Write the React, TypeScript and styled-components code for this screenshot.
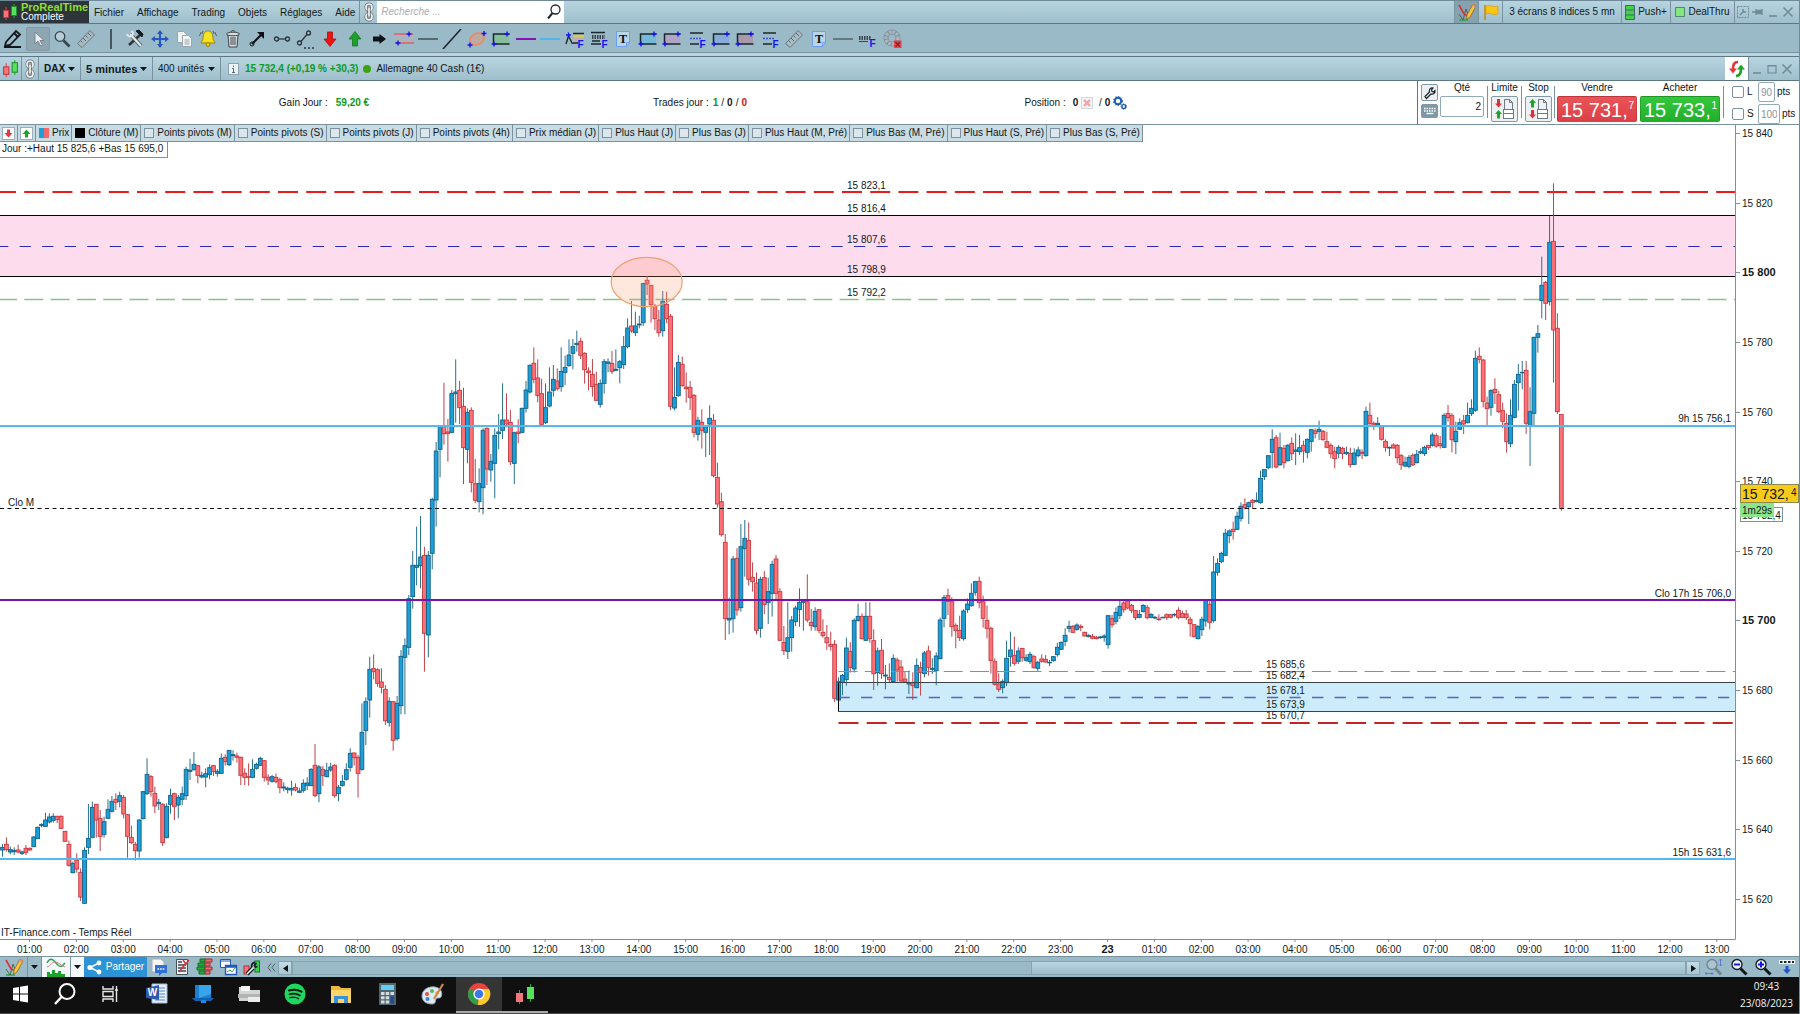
import React, { useLayoutEffect, useRef, useState } from "react";
import styled, { createGlobalStyle } from "styled-components";

const c = {
  barTop: "#b7d4e0",
  barBottom: "#9fbfcc",
  bar: "#9bbac8",
  line: "#7892a0",
  dark: "#5d7684",
  ink: "#101820",
  muted: "#6f8b99",
  legend: "#c9dbe3",
};

const sans = `"Liberation Sans", Arial, Helvetica, sans-serif`;

const Global = createGlobalStyle`
  * { box-sizing: border-box; }
  body { margin: 0; background: #fff; }
  button, input, select { font: inherit; color: inherit; margin: 0; }
`;

const Root = styled.div`
  display: flex;
  flex-direction: column;
  height: 100vh;
  min-height: 600px;
  font-family: ${sans};
  font-size: 10px;
  line-height: 12px;
  color: ${c.ink};
  background: #fff;
  border-right: 1px solid ${c.muted};
`;

const Icon = styled.svg<{ $w?: number; $h?: number }>`
  display: block;
  flex: none;
  width: ${(p) => p.$w ?? 20}px;
  height: ${(p) => p.$h ?? 20}px;
`;

/* ---------- menu bar ---------- */

const MenuBar = styled.header`
  display: flex;
  align-items: stretch;
  height: 24px;
  flex: none;
  background: linear-gradient(${c.barTop}, ${c.barBottom});
  border-top: 1px solid ${c.muted};
  border-bottom: 1px solid ${c.dark};
`;

const Brand = styled.div`
  display: flex;
  align-items: center;
  gap: 3px;
  width: 89px;
  padding-left: 2px;
  background: #2d343a;
  color: #fff;
  line-height: 10px;
`;

const BrandName = styled.strong`
  display: block;
  font-size: 11px;
  color: #8ee02a;
`;

const Menu = styled.nav`
  display: flex;
  align-items: center;
  gap: 13px;
  padding: 2px 4px 0 5px;
`;

const Plain = styled.button`
  display: flex;
  align-items: center;
  justify-content: center;
  padding: 0;
  border: 0;
  background: none;
`;

const LinkSlot = styled(Plain)<{ $w: number }>`
  width: ${(p) => p.$w}px;
  border-left: 1px solid ${c.line};
`;

const Search = styled.label`
  display: flex;
  align-items: center;
  width: 187px;
  padding: 0 3px 0 4px;
  background: #fff;
`;

const SearchInput = styled.input`
  flex: 1;
  min-width: 0;
  padding: 0;
  border: 0;
  outline: 0;
  background: none;
  font-style: italic;
  &::placeholder {
    color: #a8adb2;
    opacity: 1;
  }
`;

const Spacer = styled.div`
  flex: 1;
`;

const StatusCell = styled(Plain)<{ $w: number; $on?: boolean }>`
  width: ${(p) => p.$w}px;
  gap: 3px;
  border-left: 1px solid ${c.line};
  background: ${(p) => (p.$on ? "#87a2af" : "none")};
  white-space: nowrap;
`;

const WindowButtons = styled.div<{ $w: number }>`
  display: grid;
  grid-auto-flow: column;
  grid-auto-columns: 1fr;
  width: ${(p) => p.$w}px;
  padding-right: 4px;
  border-left: 1px solid ${c.line};
`;

/* ---------- drawing toolbar ---------- */

const ToolBar = styled.div`
  height: 33px;
  flex: none;
  border-bottom: 1px solid ${c.dark};
`;

const ToolRow = styled.div`
  height: 29px;
  padding: 1px 0 0 1px;
  border-bottom: 1px solid ${c.line};
  background: ${c.bar};
`;

const Tools = styled.div`
  display: grid;
  grid-template-columns: repeat(37, 1fr);
  width: 903px;
  height: 27px;
  align-items: center;
  justify-items: center;
`;

const ToolGap = styled.div`
  height: 3px;
  background: ${c.barTop};
`;

const Tool = styled(Plain)<{ $on?: boolean }>`
  width: 24px;
  height: 24px;
  border-radius: 2px;
  border: 1px solid ${(p) => (p.$on ? "#8299a4" : "transparent")};
  background: ${(p) => (p.$on ? "#8ea6b2" : "none")};
`;

/* ---------- instrument bar ---------- */

const InstrumentBar = styled.div`
  display: flex;
  align-items: stretch;
  height: 24px;
  flex: none;
  background: linear-gradient(${c.barTop}, ${c.barBottom});
  border-bottom: 1px solid ${c.dark};
`;

const Cell = styled(Plain)<{ $w: number }>`
  width: ${(p) => p.$w}px;
  border-right: 1px solid ${c.line};
`;

const Picker = styled.label<{ $w: number }>`
  display: flex;
  align-items: center;
  width: ${(p) => p.$w}px;
  padding: 0 5px;
  border-right: 1px solid ${c.line};
`;

const PickerSelect = styled.select<{ $bold?: boolean; $size?: number }>`
  appearance: none;
  flex: 1;
  min-width: 0;
  padding: 0;
  border: 0;
  outline: 0;
  background: none;
  font-weight: ${(p) => (p.$bold ? 700 : 400)};
  font-size: ${(p) => p.$size ?? 10}px;
`;

const Quote = styled.div`
  display: flex;
  align-items: center;
  gap: 5px;
  padding-left: 7px;
`;

const Up = styled.strong`
  color: #0b9a24;
  margin-left: 1px;
`;
const Down = styled.strong`
  color: #d01818;
`;
const Dot = styled.span`
  width: 8px;
  height: 8px;
  border-radius: 50%;
  background: #3fa012;
`;

const Refresh = styled(Plain)`
  width: 23px;
  background: #fff;
`;

/* ---------- account and order panel ---------- */

const Panel = styled.section`
  display: flex;
  height: 44px;
  flex: none;
  border-bottom: 1px solid ${c.line};
  background: #fff;
`;

const Account = styled.div`
  flex: 1;
  display: grid;
  grid-template-columns: repeat(3, 1fr);
  padding: 0 153px 0 136px;
  align-items: center;
  justify-items: center;
`;

const Figure = styled.div`
  display: flex;
  align-items: center;
  gap: 3px;
  white-space: pre;
`;

const FigureName = styled.span`
  margin-right: 4px;
`;

const Order = styled.div`
  display: flex;
  width: 382px;
  border-left: 1px solid ${c.dark};
  padding: 1px 0 0 3px;
`;

const SmallTools = styled.div`
  display: flex;
  flex-direction: column;
  gap: 3px;
  padding-top: 2px;
  width: 19px;
`;

const Field = styled.label<{ $w: number }>`
  display: flex;
  flex-direction: column;
  gap: 2px;
  width: ${(p) => p.$w}px;
  align-items: center;
`;

const OrderGroup = styled.div<{ $w: number }>`
  display: flex;
  flex-direction: column;
  align-items: center;
  gap: 2px;
  width: ${(p) => p.$w}px;
`;

const Rule = styled.div<{ $w?: number }>`
  width: ${(p) => p.$w ?? 7}px;
  height: 32px;
  margin-top: 4px;
  background: linear-gradient(${c.line}, ${c.line}) center / 1px 100% no-repeat;
`;

const PriceButtons = styled.div`
  display: flex;
  gap: 3px;
`;

const Box = styled.input<{ $w: number; $h: number; $dim?: boolean }>`
  width: ${(p) => p.$w}px;
  height: ${(p) => p.$h}px;
  padding: 0 2px;
  border: 1px solid #93a9b5;
  border-radius: 2px;
  background: #fff;
  text-align: right;
  color: ${(p) => (p.$dim ? "#8a959c" : c.ink)};
  outline: 0;
`;

const IconButton = styled(Plain)<{ $w: number; $h: number; $fill?: string }>`
  width: ${(p) => p.$w}px;
  height: ${(p) => p.$h}px;
  border: 1px solid #8299a5;
  border-radius: 2px;
  background: ${(p) => p.$fill ?? "#eef1f3"};
`;

const PriceButton = styled.button<{ $fill: string }>`
  display: flex;
  align-items: flex-start;
  justify-content: space-between;
  width: 80px;
  height: 26px;
  padding: 0 2px 0 3px;
  border: 1px solid rgba(0, 0, 0, 0.15);
  border-radius: 2px;
  background: ${(p) => p.$fill};
  color: #fff;
  font-size: 20px;
  line-height: 26px;
  white-space: nowrap;
`;

const Tick = styled.small`
  font-size: 10px;
  line-height: 18px;
`;

const Protect = styled.div`
  display: flex;
  flex-direction: column;
  gap: 2px;
  padding-left: 5px;
`;

const ProtectRow = styled.div`
  display: flex;
  align-items: center;
  gap: 2px;
  height: 20px;
`;

const Check = styled.input<{ $s: number }>`
  appearance: none;
  flex: none;
  width: ${(p) => p.$s}px;
  height: ${(p) => p.$s}px;
  border: 1px solid #7d929e;
  border-radius: ${(p) => (p.$s > 10 ? 2 : 0)}px;
  background: ${(p) => (p.$s > 10 ? "#fff" : "#dbe7ec")};
`;

const CheckLabel = styled.label`
  display: flex;
  align-items: center;
  gap: 3px;
  width: 24px;
`;

/* ---------- chart ---------- */

const ChartPanel = styled.main`
  position: relative;
  flex: 1;
  min-height: 0;
`;

const Plot = styled.svg`
  position: absolute;
  inset: 0;
  width: 100%;
  height: 100%;
  font-family: ${sans};
  font-size: 10px;
  fill: ${c.ink};
`;

const Overlay = styled.div`
  position: absolute;
  top: 0;
  left: 0;
  display: flex;
  flex-direction: column;
  align-items: flex-start;
`;

const Legend = styled.div`
  display: flex;
  height: 17px;
  background: ${c.legend};
  border-bottom: 1px solid ${c.line};
`;

const LegendItem = styled.label`
  display: flex;
  align-items: center;
  gap: 3px;
  padding: 0 2px 0 3px;
  border-right: 1px solid ${c.line};
  white-space: nowrap;
`;

const LegendArrow = styled(Plain)`
  width: 18px;
  border-right: 1px solid ${c.line};
`;

const Swatch = styled.span<{ $fill: string }>`
  width: 10px;
  height: 10px;
  background: ${(p) => p.$fill};
`;

const DayRange = styled.div`
  height: 16px;
  padding: 1px 4px 0 2px;
  border: solid ${c.line};
  border-width: 0 1px 1px 0;
  background: #fff;
  white-space: nowrap;
`;

/* ---------- bottom bars ---------- */

const BottomBar = styled.div`
  display: flex;
  align-items: stretch;
  height: 21px;
  flex: none;
  background: ${c.bar};
  border-top: 1px solid ${c.line};
  overflow: hidden;
`;

const BottomButton = styled(Plain)<{ $w: number; $fill?: string; $edge?: boolean }>`
  width: ${(p) => p.$w}px;
  flex: none;
  background: ${(p) => p.$fill ?? "none"};
  border-right: ${(p) => (p.$edge ? `1px solid ${c.line}` : "0")};
`;

const Share = styled(Plain)`
  width: 63px;
  gap: 4px;
  background: #2c93d6;
  color: #fff;
`;

const Track = styled.div`
  flex: 1;
  display: flex;
  align-items: stretch;
  margin: 4px 0 2px;
  border: 1px solid #86a3b1;
`;

const Thumb = styled.div`
  width: 47%;
  margin-left: auto;
  background: linear-gradient(#b9d6e2, #9dbdcb);
  border-left: 1px solid #86a3b1;
`;

const ScrollButton = styled(Plain)`
  width: 14px;
  flex: none;
  margin: 4px 0 2px;
  border: 1px solid #86a3b1;
  background: linear-gradient(#c6dde6, #a9c6d2);
`;

const TaskBar = styled.footer`
  display: flex;
  height: 37px;
  flex: none;
  background: #101010;
  color: #f2f2f2;
  border-bottom: 1px solid #4a4a4a;
`;

const Task = styled(Plain)<{ $w?: number; $active?: boolean; $open?: boolean }>`
  width: ${(p) => p.$w ?? 46}px;
  background: ${(p) => (p.$active ? "#343434" : "none")};
  border-bottom: 2px solid ${(p) => (p.$active || p.$open ? "#a9a9a9" : "transparent")};
`;

const Clock = styled.div`
  margin-left: auto;
  padding: 1px 6px 0 0;
  display: flex;
  flex-direction: column;
  gap: 1px;
  align-items: center;
  font-family: "Open Sans", "Noto Sans", sans-serif;
  line-height: 16px;
`;

const DateLine = styled.span``;

/* ---------- shared icons ---------- */

const Caret = () => (
  <Icon $w={7} $h={4} viewBox="0 0 7 4"><path d="M0 0h7L3.500 4z" fill="#0c1318" /></Icon>
);

const Candles = ({ s = 16 }: { s?: number }) => (
  <Icon $w={s} $h={s} viewBox="0 0 16 16">
    <path d="M4 3v13" stroke="#e0454c" /><path d="M12 0v14" stroke="#29a33a" />
    <rect x="1.5" y="6.500" width="5" height="7" fill="#f2767b" stroke="#c5363d" />
    <rect x="9.500" y="2.500" width="5" height="9" fill="#58e05c" stroke="#1f8f2f" />
  </Icon>
);

const Chain = () => (
  <Icon $w={10} $h={20} viewBox="0 0 10 20" fill="none" strokeLinecap="round">
    <g stroke="#5c666c" strokeWidth="3"><rect x="2" y="2" width="6" height="6.500" rx="3" /><rect x="2" y="11.500" width="6" height="6.500" rx="3" /></g>
    <g stroke="#f6f6f3" strokeWidth="1.700"><rect x="2" y="2" width="6" height="6.500" rx="3" /><rect x="2" y="11.500" width="6" height="6.500" rx="3" /></g>
    <path d="M5 6v8" stroke="#5c666c" strokeWidth="3.200" /><path d="M5 6v8" stroke="#f6f6f3" strokeWidth="1.700" />
  </Icon>
);

const PencilChart = () => (
  <Icon viewBox="0 0 20 20" fill="none">
    <path d="M2 18h9" stroke="#2ca44a" strokeWidth="1.500" />
    <path d="M2 12l4 6 3-11 3 8" stroke="#4d6a56" />
    <path d="M2 3l5 9 4 2" stroke="#d8323a" strokeWidth="1.600" />
    <path d="M16 2l3 2-6 11-3.500 2.500.500-4.500z" fill="#f7c63c" stroke="#8a6a20" strokeWidth=".8" />
    <path d="M16 2l3 2-1 2-3-2z" fill="#ee8a84" />
  </Icon>
);

const Minimize = () => (
  <Icon $w={12} $h={12} viewBox="0 0 12 12"><path d="M2 10h8" stroke={c.muted} strokeWidth="1.600" /></Icon>
);
const Maximize = () => (
  <Icon $w={12} $h={12} viewBox="0 0 12 12"><path d="M2 2.500h8v7.500H2zM2 3h8" stroke={c.muted} strokeWidth="1.200" fill="none" /></Icon>
);
const Close = () => (
  <Icon $w={12} $h={12} viewBox="0 0 12 12"><path d="M1.500 1.500l9 9M10.500 1.500l-9 9" stroke={c.muted} strokeWidth="1.600" /></Icon>
);

const Gears = () => (
  <Icon $w={14} $h={14} viewBox="0 0 14 14" fill="none" stroke="#1d5cae">
    <circle cx="5" cy="5" r="3.200" strokeWidth="2" /><circle cx="5" cy="5" r="4.600" strokeWidth="1" strokeDasharray="1.500 1.500" />
    <circle cx="10.800" cy="10.500" r="1.900" strokeWidth="1.400" /><circle cx="10.800" cy="10.500" r="2.800" strokeWidth=".8" strokeDasharray="1 1" />
  </Icon>
);

const ArrowV = ({ up, tone, x = 0, y = 0 }: { up?: boolean; tone: string; x?: number; y?: number }) => (
  <path transform={`translate(${x} ${y})`} fill={tone} d={up ? "M3.500 0L7 4H5v4.500H2V4H0z" : "M2 0h3v4.500h2L3.500 8.500 0 4.500h2z"} />
);

const OrderIcon = ({ stop }: { stop?: boolean }) => (
  <Icon $w={22} $h={22} viewBox="0 0 22 22">
    <path d="M10.500 12V1.500h5l3 3V11M15.500 1.500v3h3" fill="none" stroke="#6c7a82" />
    <ArrowV x={1} y={1} up={stop} tone={stop ? "#1ea32c" : "#df3038"} />
    <ArrowV x={1} y={12} up={!stop} tone={stop ? "#df3038" : "#1ea32c"} />
    <rect x="9.500" y="11.500" width="10" height="4" fill="#fff" stroke="#6c7a82" /><rect x="9.500" y="15.500" width="10" height="5" fill="#fff" stroke="#6c7a82" />
  </Icon>
);

const Magnifier = ({ tone = "#29343b", sign, glass = "#eaf4ff" }: { tone?: string; sign?: string; glass?: string }) => (
  <Icon $w={18} $h={18} viewBox="0 0 18 18" fill="none">
    <path d="M10.500 10.500l6 6" stroke={tone} strokeWidth="3" /><circle cx="7" cy="6.500" r="5" fill={glass} stroke={tone} strokeWidth="1.300" />
    {sign && <path d={sign} stroke="#1414e0" strokeWidth="2" />}
  </Icon>
);

/* ---------- drawing tools ---------- */

const plus = (x: number, y: number) => `M${x - 2.5} ${y}h5M${x} ${y - 2.5}v5`;
const BLUE = "#1414f0";

const RulerArt = () => (
  <g><path d="M1.500 14.500L14 1.500l4.500 4.500L6 18.500z" fill="#a9bac2" stroke="#66757e" /><path d="M4.500 11.500l2 2M7 9l3 3M9.500 6.500l2 2M12 4l3 3" stroke="#57656d" /></g>
);
const TextArt = () => (
  <g><path d="M3.500 2.500h13v11l-3 4h-10z" fill="#b9d5e6" stroke="#6f9df0" /><path d="M13.500 17.500v-4h3" fill="none" stroke="#6f9df0" /><text x="10" y="14" textAnchor="middle" fontSize="12" fontWeight="700" fontFamily="Liberation Serif, serif" fill="#0a0f14">T</text></g>
);
const BoxArt = ({ fill }: { fill: string }) => (
  <g><rect x="2.500" y="5" width="15.500" height="10" fill={fill} /><path d="M18.500 5h-16v10h16" fill="none" stroke="#1d262c" strokeWidth="1.500" /><path d={plus(16, 5) + plus(3, 15)} stroke={BLUE} strokeWidth="1.400" /></g>
);
const FText = ({ y = 19 }: { y?: number }) => <text x="12.500" y={y} fontSize="10" fontWeight="700" fill={BLUE}>F</text>;
const LevelsArt = () => (
  <g><path d="M3 4h13M3 15h9" stroke="#1d262c" strokeWidth="1.500" /><path d="M3 9.500h12" stroke="#3d55d8" strokeDasharray="2 1" strokeWidth="1.300" /><FText /></g>
);

const tools: { name: string; on?: boolean; art: React.ReactNode }[] = [
  { name: "Dessiner", art: <g fill="none" stroke="#10161a"><path d="M3 13L13 2l4 3.500L7 16l-5 1z" strokeWidth="1.800" /><path d="M1 18h17" strokeWidth="2" /><path d="M11 4l4 4" strokeWidth="2" /></g> },
  { name: "Sélection", on: true, art: <path d="M7 3v12l3-3 2.500 5 2-1-2.500-4.500h4z" fill="#e9edef" stroke="#76858d" /> },
  { name: "Loupe", art: <g fill="none"><path d="M11.500 11.500l6 6" stroke="#39434a" strokeWidth="2.600" /><circle cx="8" cy="7.500" r="4.800" stroke="#39434a" strokeWidth="1.300" fill="#b5cdd8" /></g> },
  { name: "Règle", art: <RulerArt /> },
  { name: "Séparateur", art: <path d="M10 0v20" stroke="#222d34" strokeWidth="1.400" /> },
  { name: "Outils", art: <g fill="none"><path d="M4 16L15 6" stroke="#2a3238" strokeWidth="2.400" /><path d="M11 2l6 6 1-3-4-4z" fill="#161c20" stroke="#161c20" /><path d="M5 5l11 12" stroke="#4b565d" strokeWidth="4" /><path d="M5 5l11 12" stroke="#e4e9eb" strokeWidth="2.200" /><path d="M2 5a3.500 3.500 0 0 0 5 2 3.500 3.500 0 0 0-.5-5" stroke="#e4e9eb" strokeWidth="2" /></g> },
  { name: "Déplacer", art: <path fill="#2257c4" d="M10 1l3 4h-2v4h4V7l4 3-4 3v-2h-4v4h2l-3 4-3-4h2v-4H5v2l-4-3 4-3v2h4V5H7z" /> },
  { name: "Copier", art: <g fill="#f2f4f4" stroke="#9aa6ad"><path d="M3.500 2.500h6l3 3v8h-9z" /><path d="M8.500 6.500h6l3 3v8h-9z" /><path d="M10.500 11h5M10.500 13h5M10.500 15h5" /></g> },
  { name: "Alerte", art: <g><path d="M10 2c-4 0-5 4-5 8l-2 4h14l-2-4c0-4-1-8-5-8z" fill="#f6e21e" stroke="#9a8610" /><circle cx="10" cy="15.500" r="2" fill="#e8c810" stroke="#9a8610" /><path d="M3 3L1.500 7M5 2L4 5M17 3l1.500 4M15 2l1 3" stroke="#55616a" /></g> },
  { name: "Supprimer", art: <g fill="#d9dcdd" stroke="#3b454b"><path d="M5 6h10l-1 12H6z" /><ellipse cx="10" cy="5" rx="6.500" ry="1.800" /><path d="M8 3c0-2 4-2 4 0M8 8v8M10 8v8M12 8v8" fill="none" /></g> },
  { name: "Flèche", art: <g><path d="M5 15l9-9" stroke="#0d1215" strokeWidth="2.200" /><path d="M10 3h7v7z" fill="#0d1215" /><circle cx="5" cy="15" r="2" fill="none" stroke="#0d1215" /></g> },
  { name: "Segment", art: <g fill="none" stroke="#2b353b" strokeWidth="1.300"><circle cx="4.500" cy="10" r="2" /><circle cx="15.500" cy="10" r="2" /><path d="M6.500 10h7" /></g> },
  { name: "Segment prolongé", art: <g fill="none" stroke="#2b353b" strokeWidth="1.300"><circle cx="3.500" cy="14" r="2" /><circle cx="12.500" cy="4" r="2" /><path d="M5 12.500l6-7" /><path d="M8 19h11" strokeWidth="1.600" strokeDasharray="2 2" /></g> },
  { name: "Flèche baissière", art: <path d="M7.500 3h5v7H16l-6 7.500L4 10h3.500z" fill="#ee1212" stroke="#a51010" strokeWidth=".8" /> },
  { name: "Flèche haussière", art: <path d="M7.500 17h5v-7H16l-6-7.500L4 10h3.500z" fill="#1fa02c" stroke="#117a1c" strokeWidth=".8" /> },
  { name: "Flèche droite", art: <path d="M4 7.500h6.500V5L17 10l-6.500 5v-2.500H4z" fill="#0d1215" /> },
  { name: "Canal", art: <g><rect x="1" y="5" width="18" height="9" fill="#abb3bc" /><path d="M0 5h19M1 14h19" stroke="#e0606a" strokeWidth="1.300" /><path d={plus(15, 5) + plus(4, 14)} stroke={BLUE} strokeWidth="1.400" /></g> },
  { name: "Horizontale", art: <path d="M0 10h20" stroke="#48555c" strokeWidth="1.600" /> },
  { name: "Droite", art: <path d="M1 20L19 0" stroke="#1a2227" strokeWidth="1.500" /> },
  { name: "Ellipse", art: <g><ellipse cx="10" cy="10" rx="7.500" ry="5.500" fill="#c0a9a2" stroke="#e88a5a" strokeWidth="1.500" transform="rotate(-25 10 10)" /><path d={plus(17, 4.5) + plus(3, 16)} stroke={BLUE} strokeWidth="1.400" /></g> },
  { name: "Rectangle vert", art: <BoxArt fill="#86bf9c" /> },
  { name: "Ligne violette", art: <path d="M0 10h20" stroke="#8416b8" strokeWidth="2" /> },
  { name: "Ligne bleue", art: <path d="M0 10h20" stroke="#4fb6ec" strokeWidth="2" /> },
  { name: "Fibonacci", art: <g><path d="M8 7h11" stroke="#d8c860" strokeWidth="3" /><path d="M9 10.500h10" stroke="#d8a888" strokeWidth="2" /><path d="M1 15L3.500 7l4 8M8 4.500h11M8 14h5" fill="none" stroke="#1d262c" strokeWidth="1.400" /><path d={plus(3.5, 6)} stroke={BLUE} strokeWidth="1.300" /><FText /></g> },
  { name: "Niveaux", art: <g><path d="M2 3.500h14M2 15h10M3 12h8" stroke="#1d262c" strokeWidth="1.400" /><path d="M3 8h13" stroke="#39444b" strokeWidth="4" strokeDasharray="1.500 1" /><FText /></g> },
  { name: "Texte", art: <TextArt /> },
  { name: "Rectangle cyan", art: <BoxArt fill="#74b9d8" /> },
  { name: "Rectangle mauve", art: <BoxArt fill="#b0a4c4" /> },
  { name: "Retracement", art: <LevelsArt /> },
  { name: "Rectangle bleu", art: <BoxArt fill="#86abd8" /> },
  { name: "Rectangle rosé", art: <BoxArt fill="#a89aa8" /> },
  { name: "Extension", art: <LevelsArt /> },
  { name: "Mesure", art: <RulerArt /> },
  { name: "Note", art: <TextArt /> },
  { name: "Ligne grise", art: <path d="M0 10h20" stroke="#5b686f" strokeWidth="1.600" /> },
  { name: "Volume", art: <g><path d="M2 9h12" stroke="#39444b" strokeWidth="4" strokeDasharray="1.500 1" /><path d="M2 12.500h9" stroke="#39444b" /><FText y={18} /></g> },
  { name: "Effacer", art: <g fill="none"><circle cx="10" cy="9" r="6" stroke="#7e8f98" strokeWidth="5" /><circle cx="10" cy="9" r="6" stroke="#a9b9c1" strokeWidth="3.400" strokeDasharray="2.500 1" /><rect x="12" y="11.500" width="7.500" height="7.500" fill="#e2454c" /><path d="M13.500 13l4.500 4.500M18 13l-4.500 4.500" stroke="#8c1b22" strokeWidth="1.200" /></g> },
];

/* ---------- market data ---------- */

// Five-minute bars. Each bar reads: direction, high, open/close top, open/close bottom, low.
// Values are thirds of a chart unit, counted down from the origin of their series.
const series: { origin: number; bars: string }[] = [
  { origin: 595, bars: `u 372 382 390 410;d 352 373 389 395;u 380 389 396 403;u 382 391 395 405;d 374 390 396 400;u 392 396 400 405;d 375 385 397 405;d 382 385 390 392;u 348 351 380 380;u 320 322 356 356;u 310 313 317 322;u 278 300 319 321;u 280 291 306 310;u 280 289 301 308;d 287 289 298 309;d 286 289 325 327;d 333 334 364 366;d 362 373 436 440;u 425 430 458 460;d 400 421 447 458;d 445 457 531 543;u 382 391 550 552;u 252 355 382 402;u 245 262 352 355;d 252 253 300 353;d 270 295 349 393;u 290 305 343 353;u 238 268 295 297;u 228 244 274 277;d 220 238 247 270;u 215 227 244 262;d 225 232 282 295;d 282 284 349 413;d 317 352 368 372;d 366 373 392 422;u 298 300 393 413;u 213 215 296 298;u 115 163 221 225;d 165 170 215 230;d 200 220 258 280;u 237 247 251 270;d 250 253 368 378;u 250 259 353 355;u 206 226 253 281;d 218 221 259 300;u 225 232 255 295;u 200 221 238 255;u 140 148 227 240;u 116 151 154 180;u 96 133 149 152;d 135 137 166 190;u 155 166 171 175;u 145 161 171 202;u 133 143 164 178;d 135 137 155 168;u 147 154 160 170;u 100 115 160 162;d 103 112 125 137;u 90 91 134 138;u 91 104 107 122;d 98 108 112 128;d 110 112 166 195;d 145 160 172 195;d 130 170 172 197;u 118 148 172 175;u 128 133 145 149;u 110 115 136 137;d 120 122 172 185;d 163 172 180 195;u 165 170 184 188;d 160 172 185 190;d 173 179 203 220;u 187 201 204 214;u 200 205 209 220;u 182 205 210 227;d 190 202 210 214;u 203 213 217 217;u 178 190 211 218;u 172 189 196 210;u 145 148 197 198;d 72 136 227 232;u 135 141 221 247;d 138 148 166 198;u 128 152 170 172;u 128 141 150 155;d 133 136 227 233;u 195 202 221 244;u 165 184 196 200;u 130 149 178 182;u 85 100 142 155;d 97 99 113 137;d 105 112 160 233` },
  { origin: 195, bars: `u 1150 1237 1348 1352;u 1132 1145 1232 1275;u 1010 1048 1140 1193;d 1003 1046 1055 1078;d 1045 1049 1090 1100;d 1045 1086 1102 1120;d 1095 1108 1202 1215;u 1132 1144 1207 1220;d 1143 1145 1261 1292;u 1128 1150 1256 1262;u 990 1009 1157 1183;u 955 977 1012 1183;u 825 836 982 1005;u 693 736 830 866;u 620 736 742 796;u 588 711 737 805;d 680 706 940 1055;u 693 706 945 1012;u 533 538 700 748;u 366 393 540 620;u 315 318 388 472;d 188 317 341 374;d 297 336 341 425;u 210 221 337 340;u 118 216 221 308;d 183 211 263 312;d 203 259 383 492;u 265 277 388 430;d 262 271 487 517;d 417 491 541 550;u 445 491 545 577;u 325 331 503 583;d 322 325 447 495;u 402 424 450 485;u 325 346 430 535;u 282 336 341 388;u 190 300 331 357;d 220 300 312 322;d 270 307 425 435;u 335 338 430 492;d 298 336 341 370;u 263 265 337 340;u 183 210 265 278;u 133 136 216 221;d 82 130 178 190;d 118 174 227 247;d 176 221 313 315;u 190 263 308 312;u 142 216 258 262;u 135 178 211 230;d 145 183 206 212;u 82 154 200 215;u 107 142 157 195;u 58 105 137 140;u 57 80 100 148;u 32 70 74 95;d 53 64 106 117;d 97 100 149 191;d 142 153 158 211;d 117 163 200 230;d 155 193 241 243;u 178 190 253 263;u 117 125 190 221;u 115 126 130 157;d 93 130 154 162;u 88 148 151 152;u 120 125 143 190;u 48 80 134 147` },
  { origin: 115, bars: `u 235 264 320 325;d 183 258 273 278;u 215 258 278 288;u 227 252 255 265;u 128 131 248 258;d 108 121 132 165;d 135 136 194 248;d 192 199 236 270;d 210 240 278 290;u 153 184 272 290;d 155 193 236 250;d 222 229 499 510;u 382 472 504 511;u 345 367 467 470;d 350 373 437 440;d 397 441 446 488;d 423 442 472 510;d 462 466 577 592;u 530 541 583 602;d 508 547 571 626;u 555 558 577 651;u 496 535 552 645;d 522 541 707 712;d 668 712 792 803;d 758 785 884 890;d 882 907 1136 1200;u 1073 1135 1140 1183;u 948 957 1136 1178;d 925 955 1110 1127;u 852 920 1103 1115;u 840 895 926 1010;d 847 901 1018 1037;d 967 1012 1025 1055;d 997 1029 1171 1183;u 1010 1018 1165 1193;d 993 1013 1093 1122;u 1013 1055 1088 1152;u 962 973 1060 1130;d 945 957 1060 1078;d 1045 1055 1201 1203;d 1158 1207 1232 1245;u 1087 1193 1234 1257;u 1128 1140 1193 1235;u 1097 1104 1145 1158;u 1045 1087 1109 1160;u 1078 1083 1087 1172;d 1003 1085 1140 1147;d 1107 1147 1157 1172;u 1102 1114 1160 1172;d 1107 1109 1171 1180;d 1138 1177 1187 1193;d 1155 1193 1208 1230;d 1175 1213 1219 1232;d 1200 1213 1375 1386;u 1312 1325 1380 1385;u 1302 1306 1328 1366;u 1193 1224 1319 1337;d 1207 1234 1282 1298;u 1135 1141 1287 1298;u 1091 1129 1141 1145;d 1120 1129 1196 1198;u 1087 1129 1201 1203;d 1087 1129 1196 1208;d 1168 1202 1301 1350;u 1223 1233 1298 1337;d 1197 1231 1301 1317;u 1275 1305 1308 1348;d 1270 1312 1319 1328;u 1243 1255 1325 1328;d 1253 1260 1290 1325;d 1260 1281 1323 1327;d 1293 1317 1326 1328;u 1292 1328 1332 1362;d 1297 1329 1337 1380;u 1255 1276 1343 1345;d 1265 1283 1297 1367;u 1233 1239 1301 1312;d 1217 1233 1282 1307;u 1255 1285 1288 1302;u 1237 1248 1292 1336;u 1133 1140 1256 1258;u 1065 1073 1135 1162` },
  { origin: 435, bars: `d 86 107 124 165;d 112 125 200 230;d 190 196 211 265;d 167 211 233 243;u 148 153 236 242;u 115 132 149 158;u 70 100 137 140;u 63 65 97 107;d 50 64 128 145;d 107 125 175 203;d 137 181 205 235;d 200 205 302 340;d 295 305 373 377;d 340 372 388 396;u 358 364 383 400;u 242 295 368 378;u 215 270 290 320;d 230 286 310 317;u 262 273 304 312;d 264 265 293 305;u 283 293 301 305;u 275 283 305 312;d 285 290 323 326;u 303 307 325 335;d 283 297 304 308;d 285 298 306 308;u 300 307 308 318;u 288 290 302 305;u 248 262 284 290;u 245 247 268 270;u 205 226 244 258;u 182 199 205 217;d 195 199 217 218;u 190 195 208 212;d 193 199 203 213;d 215 217 228 229;u 223 226 230 232;d 222 229 235 238;d 228 232 236 238;u 228 231 233 237;u 223 228 232 245;u 165 167 254 266;d 165 176 194 203;u 142 157 184 193;u 122 139 166 177;d 118 129 149 158;d 120 123 144 148;d 132 136 151 160;d 150 152 173 180;u 150 163 172 175;u 133 136 155 157;d 135 143 173 178;u 160 163 172 175;u 168 172 174 178;d 163 177 179 182;u 170 172 173 174;d 160 164 172 180;d 162 164 172 175;u 160 163 165 170;d 142 151 172 178;d 152 161 172 175;d 150 162 173 180;d 170 178 191 230;d 192 194 230 232;u 195 200 236 238;u 170 178 209 228;u 118 121 183 200;d 118 133 187 208` },
  { origin: 255, bars: `u 528 576 722 728;u 535 550 577 587;u 515 520 545 550;u 447 460 526 528;u 448 453 467 490;d 425 448 454 479;u 395 409 448 450;u 367 379 415 425;d 355 374 383 388;u 365 368 380 432;d 357 361 367 387;u 337 361 365 367;u 272 295 368 371;u 268 269 290 300;u 225 227 263 268;u 148 178 217 265;d 165 173 261 265;u 158 203 254 258;d 195 205 248 265;u 192 196 242 245;d 172 190 221 240;u 160 210 214 255;u 165 203 215 225;d 182 196 213 248;u 175 178 217 235;u 148 149 184 215;d 145 153 160 175;u 122 148 154 180;d 150 154 179 182;d 155 185 202 205;d 190 196 221 235;d 200 215 236 265;u 195 202 220 235;d 200 205 220 237;u 200 217 221 225;d 203 220 254 263;u 205 219 253 255;u 200 210 227 232;d 208 217 220 237;u 80 94 227 230;d 68 106 130 135;d 125 130 135 150;u 112 130 134 138;d 135 137 178 182;d 178 184 202 215;u 200 202 204 228;d 190 195 204 206;d 192 196 233 250;d 222 227 254 270;u 230 247 258 262;u 225 232 259 265;d 220 226 254 258;u 210 223 248 250;u 205 215 219 222;u 197 202 221 228;d 195 196 203 210;u 158 165 196 200;d 160 167 198 203;d 168 191 197 206;u 100 106 202 203;d 75 100 113 125;d 100 107 179 217;u 125 154 185 222` },
  { origin: 35, bars: `u 775 788 808 810;d 765 782 792 822;u 728 766 788 790;u 718 745 761 768;u 572 595 751 755;d 562 589 598 610;d 597 600 724 742;d 710 729 746 795;u 688 692 742 767;d 655 688 698 732;d 692 704 755 760;d 728 752 784 805;d 760 790 845 878;u 718 766 851 862;u 660 673 772 775;u 612 643 668 752;u 603 637 638 688;d 603 631 790 822;u 682 755 796 918;u 530 532 760 798;u 495 521 532 578;u 290 376 422 475;d 363 367 430 480;u 167 247 425 437;d 70 244 510 668;d 460 505 755 762;d 763 763 1045 1052` },
];

const bars = series.flatMap(({ origin, bars: text }) =>
  text.split(";").map((row) => {
    const [dir, ...v] = row.trim().split(" ");
    const [high, top, bottom, low] = v.map((n) => origin + Number(n) / 3);
    return { up: dir === "u", high, top, bottom, low };
  })
);

const BASE_W = 1736;
const BASE_H = 831;
const AXIS_W = 63;
const AXIS_H = 17;

const priceUnit = (p: number) => 8.5 + (15840 - p) * 3.4818;
const fr = (p: number, digits = 1) => {
  const [a, b] = p.toFixed(digits).split(".");
  return `${a.slice(0, 2)} ${a.slice(2)}${b ? "," + b : ""}`;
};

const upperLevels = [
  { p: 15823.1, stroke: "#ee1a1a", w: 2, dash: "20 8.2", from: -4 },
  { p: 15816.4, stroke: "#000", w: 1 },
  { p: 15807.6, stroke: "#2a2ab8", w: 1, dash: "11.3 11.25", from: -3 },
  { p: 15798.9, stroke: "#000", w: 1 },
  { p: 15792.2, stroke: "#86c486", w: 1.5, dash: "19 7.3", from: -2 },
];
const lowerLevels = [
  { p: 15685.6, stroke: "#5bb05b", w: 1, dash: "19 7.3" },
  { p: 15682.4, stroke: "#3c4448", w: 1 },
  { p: 15678.1, stroke: "#5a60c8", w: 1.5, dash: "11.3 11.25" },
  { p: 15673.9, stroke: "#3c4448", w: 1 },
  { p: 15670.7, stroke: "#c42424", w: 2, dash: "20 8.2" },
];
const marks = [
  { p: 15756.1, name: "9h", stroke: "#53b9ee", w: 2 },
  { p: 15706.0, name: "Clo 17h", stroke: "#7a12b0", w: 2 },
  { p: 15631.6, name: "15h", stroke: "#53b9ee", w: 2 },
];

function Chart() {
  const ref = useRef<SVGSVGElement>(null);
  const [size, setSize] = useState({ w: BASE_W + AXIS_W, h: BASE_H });
  useLayoutEffect(() => {
    const el = ref.current;
    if (!el) return;
    const measure = () => {
      const r = el.getBoundingClientRect();
      setSize({ w: r.width, h: r.height });
    };
    measure();
    const watch = new ResizeObserver(measure);
    watch.observe(el);
    return () => watch.disconnect();
  }, []);

  const right = size.w - AXIS_W;
  const floor = size.h - AXIS_H;
  const kx = right / BASE_W;
  const ky = size.h / BASE_H;
  const X = (v: number) => v * kx;
  const Y = (v: number) => v * ky;
  // Thin lines sit on pixel centres and two-pixel lines on pixel edges, so both stay sharp.
  const P = (p: number, w = 1) => (w === 2 ? Math.round(Y(priceUnit(p))) : Math.floor(Y(priceUnit(p))) + 0.5);
  const zoneX = Math.round(X(838)) + 0.5;
  const now = P(15732.4);

  return (
    <Plot ref={ref} role="img" aria-label="DAX 5 minutes">
      <rect x={0} y={P(15816.4)} width={right} height={P(15798.9) - P(15816.4)} fill="#fddcee" />
      <rect x={zoneX} y={P(15682.4)} width={right - zoneX} height={P(15673.9) - P(15682.4)} fill="#ccecfb" />

      {upperLevels.map((l) => (
        <line key={l.p} x1={l.from ?? 0} x2={right} y1={P(l.p, l.w)} y2={P(l.p, l.w)} stroke={l.stroke} strokeWidth={l.w} strokeDasharray={l.dash} />
      ))}

      {bars.map((b, i) => {
        const x = X(2.5 + i * 3.9068);
        return (
          <g key={i}>
            <line x1={x} x2={x} y1={Y(b.high)} y2={Y(b.low)} stroke={b.up ? "#27708f" : "#bf4148"} />
            <rect x={x - 1.9} y={Y(b.top)} width={3.8} height={Math.max(Y(b.bottom) - Y(b.top), 0.5)} fill={b.up ? "#1b9fd6" : "#fa7276"} stroke={b.up ? "#11618a" : "#c63a41"} strokeWidth={0.9} />
          </g>
        );
      })}

      {lowerLevels.map((l) => (
        <line key={l.p} x1={zoneX} x2={right} y1={P(l.p, l.w)} y2={P(l.p, l.w)} stroke={l.stroke} strokeWidth={l.w} strokeDasharray={l.dash} />
      ))}
      <line x1={zoneX} x2={zoneX} y1={P(15682.4)} y2={P(15673.9)} stroke="#000" />

      <ellipse cx={X(646.7)} cy={Y(157)} rx={X(35.5)} ry={Y(24.7)} fill="#f9966a" fillOpacity={0.22} stroke="#efa070" strokeWidth={1.2} />

      {upperLevels.map((l) => <text key={l.p} x={X(847)} y={P(l.p) - 4}>{fr(l.p)}</text>)}
      {lowerLevels.map((l) => <text key={l.p} x={X(1266)} y={P(l.p) - 4}>{fr(l.p)}</text>)}

      {marks.map((m) => (
        <g key={m.p}>
          <line x1={0} x2={right} y1={P(m.p, m.w)} y2={P(m.p, m.w)} stroke={m.stroke} strokeWidth={m.w} />
          <text x={right - 5} y={P(m.p) - 4} textAnchor="end">{m.name} {fr(m.p)}</text>
        </g>
      ))}

      <line x1={0} x2={right + 4} y1={now} y2={now} stroke="#101010" strokeDasharray="4 3.5" />
      <text x={8} y={now - 3}>Clo M</text>
      <text x={1} y={floor - 3}>IT-Finance.com - Temps Réel</text>

      <path d={`M${right - 0.5} 0V${floor + 0.5}H0`} fill="none" stroke={c.line} />
      {Array.from({ length: 12 }, (_, i) => 15840 - i * 20).map((p) => {
        const strong = p % 100 === 0;
        return (
          <g key={p}>
            <line x1={right} x2={right + 4} y1={P(p)} y2={P(p)} stroke={c.line} />
            <text x={right + 6} y={P(p) + 3} fontWeight={strong ? 700 : 400} fontSize={strong ? 11 : 10}>{fr(p, 0)}</text>
          </g>
        );
      })}
      {Array.from({ length: 37 }, (_, i) => i).map((i) => {
        const hour = (i + 1) % 24;
        const day = hour === 0;
        const x = X(29.5 + i * 46.87);
        return (
          <g key={i}>
            <line x1={x} x2={x} y1={floor} y2={floor + 3} stroke={c.line} />
            <text x={x} y={floor + 14} textAnchor="middle" fontWeight={day ? 700 : 400} fontSize={day ? 11 : 10}>
              {day ? "23" : `${String(hour).padStart(2, "0")}:00`}
            </text>
          </g>
        );
      })}

      <rect x={right + 4.5} y={now - 1} width={42} height={14} fill="#fff" stroke={c.line} />
      <text x={right + 6} y={now + 10}>15 732,4</text>
      <rect x={right + 4} y={now - 5.5} width={34} height={14} fill="#8ee48e" />
      <text x={right + 6} y={now + 5}>1m29s</text>
      <rect x={right + 4.5} y={now - 24} width={58} height={18} fill="#f7cb1c" stroke="#8c8a50" />
      <text x={right + 6} y={now - 10} fontSize={14}>15 732,</text>
      <text x={right + 55} y={now - 13} fontSize={10}>4</text>
    </Plot>
  );
}

const overlays = ["Points pivots (M)", "Points pivots (S)", "Points pivots (J)", "Points pivots (4h)", "Prix médian (J)", "Plus Haut (J)", "Plus Bas (J)", "Plus Haut (M, Pré)", "Plus Bas (M, Pré)", "Plus Haut (S, Pré)", "Plus Bas (S, Pré)"];

const menus = ["Fichier", "Affichage", "Trading", "Objets", "Réglages", "Aide"];

const tasks: { name: string; w?: number; active?: boolean; open?: boolean; art: React.ReactNode }[] = [
  { name: "Démarrer", w: 42, art: <path fill="#fff" d="M4 6l6-1v6.500H4zM11 4.800l8-1.300v8h-8zM4 12.500h6V19l-6-1zM11 12.500h8v8l-8-1.300z" /> },
  { name: "Rechercher", art: <g fill="none" stroke="#fff" strokeWidth="2"><circle cx="14" cy="9.500" r="7.500" /><path d="M8.500 15L2 22" strokeWidth="2.400" /></g> },
  { name: "Vue des tâches", art: <g fill="none" stroke="#e8e8e8" strokeWidth="1.400"><path d="M4 4v3h10V4M4 20v-3h10v3M4 9.500h10v5H4zM17.500 4v16M16 8h3" /></g> },
  { name: "Word", art: <g><path d="M7 2h15v19H7z" fill="#e9f0fa" stroke="#9fb7dc" /><path d="M14 6h6M14 9h6M14 12h6M14 15h6M10 18h10" stroke="#5b83c4" /><path d="M1 6l13-3v15L1 16z" fill="#2b5bb0" /><text x="7.500" y="14" fontSize="10" fontWeight="700" fill="#fff" textAnchor="middle">W</text></g> },
  { name: "Bureau", art: <g><path d="M4 3h16v13H4z" fill="#1c7fd2" /><path d="M8 3h12v9L8 16z" fill="#38a4ec" /><path d="M1 16h22l-3 3H4z" fill="#0f62b0" /><path d="M10 18h5v3h-5z" fill="#1a8be0" /></g> },
  { name: "Imprimante", art: <g><path d="M2 5h9l2 3h10v11H2z" fill="#d4d6d6" /><path d="M4 4h9v5H4z" fill="#f6f6f6" /><path d="M1 12h22v4H1z" fill="#b0b4b4" /><path d="M11 15h12v5H11z" fill="#ececec" /></g> },
  { name: "Spotify", art: <g fill="none" stroke="#0e1a12" strokeLinecap="round"><circle cx="12" cy="12" r="10.500" fill="#1ed760" stroke="none" /><path d="M6 8.500c4-1.200 9-.8 12.500 1.200" strokeWidth="2" /><path d="M6.500 12.200c3.500-1 7.500-.6 10.500 1.200" strokeWidth="1.700" /><path d="M7 15.600c3-.8 6-.5 8.500 1" strokeWidth="1.400" /></g> },
  { name: "Explorateur", art: <g><path d="M2 4h8l2 2h10v15H2z" fill="#f0b73a" /><path d="M2 8h20v13H2z" fill="#fbd566" /><path d="M5 14h14v7h-4v-4H9v4H5z" fill="#3a90d8" /></g> },
  { name: "Calculatrice", art: <g><path d="M4 1h17v22H4z" fill="#52666f" /><path d="M6 3h13v5H6z" fill="#5fd0f2" /><path d="M6 10h3.500v3H6zM10.700 10h3.500v3h-3.500zM15.500 10H19v3h-3.500zM6 14.300h3.500v3H6zM10.700 14.300h3.500v3h-3.500zM6 18.600h3.500v3H6zM10.700 18.600h3.500v3h-3.500z" fill="#d6dde0" /><path d="M15.500 14.300H19v7.300h-3.500z" fill="#24489a" /></g> },
  { name: "Paint", art: <g><path d="M1 14C1 8 7 4 14 5c6 1 8 6 6 10-1.500 2-4 0-5 2s0 5-4 5C5 22 1 19 1 14z" fill="#dfe9f2" stroke="#8fa9bf" /><circle cx="6" cy="12" r="2" fill="#e3524a" /><circle cx="11" cy="9" r="2" fill="#58b84d" /><circle cx="6.500" cy="17" r="2" fill="#3b82d8" /><circle cx="16" cy="11" r="1.800" fill="#f0b62c" /><path d="M22 2l-9 15" stroke="#c98a4c" strokeWidth="2.200" /></g> },
  { name: "Chrome", active: true, art: <g><circle cx="12" cy="12" r="11" fill="#e8443a" /><path d="M12 12L2.500 6.500A11 11 0 0 0 11 23z" fill="#2da04c" /><path d="M12 12l-1 11A11 11 0 0 0 22 7H12z" fill="#fbcb2c" /><circle cx="12" cy="12" r="5.600" fill="#fff" /><circle cx="12" cy="12" r="4.300" fill="#3b78e7" /></g> },
  { name: "ProRealTime", open: true, art: <g><path d="M6.500 8v14" stroke="#e0454c" /><path d="M17.500 2v18" stroke="#29a33a" /><rect x="3" y="11" width="7" height="9" fill="#f2767b" /><rect x="14" y="5" width="7" height="12" fill="#58e05c" /></g> },
];

export default function App() {
  return (
    <Root>
      <Global />
      <MenuBar>
        <Brand>
          <Candles />
          <div><BrandName>ProRealTime</BrandName>Complete</div>
        </Brand>
        <Menu>{menus.map((m) => <Plain key={m}>{m}</Plain>)}</Menu>
        <LinkSlot $w={18} aria-label="Lier"><Chain /></LinkSlot>
        <Search>
          <SearchInput aria-label="Recherche" placeholder="Recherche ..." />
          <Icon $w={14} $h={16} viewBox="0 0 14 16" fill="none" stroke="#20282d"><circle cx="8.500" cy="5.500" r="4.500" strokeWidth="1.300" /><path d="M5.500 9L1 14.500" strokeWidth="2" /></Icon>
        </Search>
        <Spacer />
        <StatusCell $w={24} $on aria-label="Dessin"><PencilChart /></StatusCell>
        <StatusCell $w={24} aria-label="Drapeau">
          <Icon $w={16} $h={16} viewBox="0 0 16 16"><path d="M2 1v15" stroke="#b98a1c" strokeWidth="1.500" /><path d="M3 2c4-2 7 2 12 0v8c-5 2-8-2-12 0z" fill="#fbc514" stroke="#e09a10" strokeWidth=".7" /></Icon>
        </StatusCell>
        <StatusCell $w={119}>3 écrans 8 indices 5 mn</StatusCell>
        <StatusCell $w={49}>
          <Icon $w={10} $h={15} viewBox="0 0 10 15"><path d="M.5.5h9v14h-9zM0 5h10M0 10h10" fill="#45d048" stroke="#3d6a72" /></Icon>Push+
        </StatusCell>
        <StatusCell $w={64}>
          <Icon $w={10} $h={10} viewBox="0 0 10 10"><path d="M.5.5h9v9h-9z" fill="#84e67e" stroke="#4d8a6c" /></Icon>DealThru
        </StatusCell>
        <WindowButtons $w={65}>
          <Plain aria-label="Options"><Icon $w={12} $h={12} viewBox="0 0 12 12" fill="none" stroke={c.muted}><path d="M.5.500h11v11H.5z" strokeDasharray="2 1" /><path d="M3 9l4-4M6 3v3h3" strokeWidth="1.600" /></Icon></Plain>
          <Plain aria-label="Épingler"><Icon $w={12} $h={12} viewBox="0 0 12 12"><path d="M0 6h4M4 3v6M4 6h6M10 3v6M5 4.500h4v3H5z" stroke={c.muted} strokeWidth="1.300" fill={c.muted} /></Icon></Plain>
          <Plain aria-label="Réduire"><Minimize /></Plain>
          <Plain aria-label="Fermer"><Close /></Plain>
        </WindowButtons>
      </MenuBar>

      <ToolBar>
        <ToolRow>
          <Tools>
            {tools.map((t) => (
              <Tool key={t.name} $on={t.on} aria-label={t.name}><Icon viewBox="0 0 20 20">{t.art}</Icon></Tool>
            ))}
          </Tools>
        </ToolRow>
        <ToolGap />
      </ToolBar>

      <InstrumentBar>
        <Cell $w={22} aria-label="Graphique"><Candles s={17} /></Cell>
        <Cell $w={17} aria-label="Lier"><Chain /></Cell>
        <Picker $w={42}><PickerSelect $bold aria-label="Instrument"><option>DAX</option></PickerSelect><Caret /></Picker>
        <Picker $w={72}><PickerSelect $bold $size={11} aria-label="Période"><option>5 minutes</option></PickerSelect><Caret /></Picker>
        <Picker $w={68}><PickerSelect aria-label="Unités"><option>400 unités</option></PickerSelect><Caret /></Picker>
        <Quote>
          <Icon $w={11} $h={12} viewBox="0 0 11 12"><rect x=".5" y=".5" width="10" height="11" fill="#eef3f5" stroke="#8ea2ad" /><path d="M5.500 2.500v1.500M5.500 5v4.500M4 5.500h1.500M4 9.500h3" stroke="#5c6a72" /></Icon>
          <Up>15 732,4 (+0,19 % +30,3)</Up>
          <Dot />
          <span>Allemagne 40 Cash (1€)</span>
        </Quote>
        <Spacer />
        <Refresh aria-label="Synchroniser">
          <Icon $w={18} $h={18} viewBox="0 0 18 18" fill="none"><path d="M10 2C6 2 5 4.500 5 9" stroke="#e03a40" strokeWidth="2.600" /><path d="M1 8.500h8L5 13.500z" fill="#e03a40" /><path d="M8 16c4 0 5-2.500 5-7" stroke="#1ea32c" strokeWidth="2.600" /><path d="M9 9.500h8L13 4.500z" fill="#1ea32c" /></Icon>
        </Refresh>
        <WindowButtons $w={51}>
          <Plain aria-label="Réduire"><Minimize /></Plain>
          <Plain aria-label="Agrandir"><Maximize /></Plain>
          <Plain aria-label="Fermer"><Close /></Plain>
        </WindowButtons>
      </InstrumentBar>

      <Panel>
        <Account>
          <Figure><FigureName>Gain Jour :</FigureName><Up>59,20 €</Up></Figure>
          <Figure><span>Trades jour :</span><Up>1</Up><span>/</span><strong>0</strong><span>/</span><Down>0</Down></Figure>
          <Figure>
            <FigureName>Position :</FigureName><strong>0</strong>
            <Icon $w={12} $h={12} viewBox="0 0 12 12"><path d="M.5.500h11v11H.5z" fill="#f2f5f8" stroke="#cfd9df" /><path d="M3 3l6 6M9 3l-6 6" stroke="#f2a4a6" strokeWidth="2.400" /></Icon>
            <span> /</span><strong>0</strong><Gears />
          </Figure>
        </Account>
        <Order>
          <SmallTools>
            <IconButton $w={17} $h={17} aria-label="Réglages"><Icon $w={14} $h={14} viewBox="0 0 14 14" fill="none" stroke="#1a2126" strokeWidth="1.200"><path d="M2 10.500l4.500-4.500c-.8-2.500 1-4.500 3.500-4L8.500 4l.5 1.500 1.500.5L12 4.500c.5 2.500-1.500 4-4 3.500L3.500 12.500z" /></Icon></IconButton>
            <IconButton $w={17} $h={14} $fill="#7f98a5" aria-label="Clavier"><Icon $w={14} $h={8} viewBox="0 0 14 8" stroke="#fff" fill="none"><path d="M1 1.500h12M1 4h12" strokeWidth="1.600" strokeDasharray="1.500 1" /><path d="M3.500 6.500h7" strokeWidth="1.400" /></Icon></IconButton>
          </SmallTools>
          <Field $w={44}>Qté<Box $w={44} $h={21} defaultValue="2" /></Field>
          <Rule />
          <OrderGroup $w={27}>Limite<IconButton $w={27} $h={26} aria-label="Limite"><OrderIcon /></IconButton></OrderGroup>
          <Rule />
          <OrderGroup $w={27}>Stop<IconButton $w={27} $h={26} aria-label="Stop"><OrderIcon stop /></IconButton></OrderGroup>
          <Rule $w={5} />
          <PriceButtons>
            <OrderGroup $w={80}>Vendre<PriceButton $fill="linear-gradient(#ea5458, #dc4046)"><span>15 731,</span><Tick>7</Tick></PriceButton></OrderGroup>
            <OrderGroup $w={80}>Acheter<PriceButton $fill="linear-gradient(#36c63c, #22b02c)"><span>15 733,</span><Tick>1</Tick></PriceButton></OrderGroup>
          </PriceButtons>
          <Rule />
          <Protect>
            <ProtectRow><CheckLabel><Check $s={12} type="checkbox" />L</CheckLabel><Box $w={17} $h={20} $dim defaultValue="90" aria-label="Limite en points" />pts</ProtectRow>
            <ProtectRow><CheckLabel><Check $s={12} type="checkbox" />S</CheckLabel><Box $w={22} $h={20} $dim defaultValue="100" aria-label="Stop en points" />pts</ProtectRow>
          </Protect>
        </Order>
      </Panel>

      <ChartPanel>
        <Chart />
        <Overlay>
          <Legend>
            <LegendArrow aria-label="Descendre"><Icon $w={13} $h={13} viewBox="0 0 13 13"><rect x=".5" y=".5" width="12" height="12" fill="#fff" stroke="#9bb0bb" /><path d="M5 2.500h3v3.500h2.500L6.500 10.500 2.500 6H5z" fill="#e0393f" /></Icon></LegendArrow>
            <LegendArrow aria-label="Monter"><Icon $w={13} $h={13} viewBox="0 0 13 13"><rect x=".5" y=".5" width="12" height="12" fill="#fff" stroke="#9bb0bb" /><path d="M5 10.500h3V7h2.500L6.500 2.500 2.500 7H5z" fill="#1ea32c" /></Icon></LegendArrow>
            <LegendItem as="span"><Swatch $fill="linear-gradient(90deg, #1b9fd6 50%, #f2686c 50%)" />Prix</LegendItem>
            <LegendItem as="span"><Swatch $fill="#000" />Clôture (M)</LegendItem>
            {overlays.map((o) => <LegendItem key={o}><Check $s={10} type="checkbox" />{o}</LegendItem>)}
          </Legend>
          <DayRange>Jour :+Haut 15 825,6 +Bas 15 695,0</DayRange>
        </Overlay>
      </ChartPanel>

      <BottomBar>
        <BottomButton $w={28} $edge aria-label="Dessin"><PencilChart /></BottomButton>
        <BottomButton $w={14} $edge aria-label="Choisir le dessin"><Caret /></BottomButton>
        <BottomButton $w={29} $fill="#f4f8fa" $edge aria-label="Indicateurs">
          <Icon viewBox="0 0 20 20" fill="none"><path d="M1 6c3-6 6-4 9 0s5 5 9 0" stroke="#2ca44a" strokeWidth="1.400" /><path d="M1 10c4-1 5-6 9-5s5 4 9 5" stroke="#d87880" /><path d="M1 20v-5h3v2h2v-4h3v3h3v-2h3v3h4v3z" fill="#19a52c" /></Icon>
        </BottomButton>
        <BottomButton $w={13} $fill="#f4f8fa" aria-label="Choisir l'indicateur"><Caret /></BottomButton>
        <Share><Icon $w={15} $h={15} viewBox="0 0 15 15"><path d="M12 3L3 7.500l9 4.500" fill="none" stroke="#fff" strokeWidth="1.500" /><circle cx="12" cy="3" r="2.400" fill="#fff" /><circle cx="3" cy="7.500" r="2.600" fill="#fff" /><circle cx="12" cy="12" r="2.400" fill="#fff" /></Icon>Partager</Share>
        <BottomButton $w={23} aria-label="Messages"><Icon $w={18} $h={18} viewBox="0 0 18 18"><path d="M2 1h9l3 3v10H2z" fill="#f4f6f7" stroke="#9fb0b9" /><path d="M5 7h12v8h-5l-3 3v-3H5z" fill="#2f6fd8" /><path d="M7.500 11h7" stroke="#fff" strokeWidth="1.600" strokeDasharray="1.600 1" /></Icon></BottomButton>
        <BottomButton $w={23} aria-label="Rapport"><Icon $w={16} $h={18} viewBox="0 0 16 18"><path d="M2.500 1.500h11v15h-11z" fill="#f1f3f3" stroke="#46525a" /><path d="M4 4h4M4 7h8M4 10h8M4 13h8" stroke="#3a464d" strokeWidth="1.300" /><path d="M9 2l3 4 3-4M5 14l7-9" stroke="#d0323a" strokeWidth="1.400" fill="none" /></Icon></BottomButton>
        <BottomButton $w={23} aria-label="Carnet"><Icon $w={18} $h={18} viewBox="0 0 18 18"><path d="M4 1h5v3H4zM2 5h7v3H2zM1 9h8v3H1zM3 13h6v3H3z" fill="#1fb034" stroke="#0e6d1c" /><path d="M9 1h7v3H9zM9 5h5v3H9zM9 9h7v3H9zM9 13h5v3H9z" fill="#f06a70" stroke="#a6262e" /></Icon></BottomButton>
        <BottomButton $w={24} aria-label="Fenêtres"><Icon $w={19} $h={18} viewBox="0 0 19 18"><g fill="#fff" stroke="#2358b8"><path d="M1.500 1.500h10v8h-10zM1.500 3h10" /><path d="M6.500 7.500h11v9h-11zM6.500 9h11" strokeWidth="1.400" /></g><path d="M8 14l3-2 2 2 3-4" stroke="#2ca44a" fill="none" /></Icon></BottomButton>
        <BottomButton $w={24} aria-label="Réglages du graphique"><Icon $w={18} $h={18} viewBox="0 0 18 18"><rect x="1" y="8" width="5" height="8" fill="#f2767b" stroke="#b52c34" /><rect x="12" y="3" width="4.500" height="11" fill="#3fd04a" stroke="#157a22" /><path d="M4 16l6-6" stroke="#1b2328" strokeWidth="4" /><path d="M13.500 5l-2 2.500 1 1.500 2-.5M12 4.500c-2.500 0-4 2.500-3 5" fill="none" stroke="#1b2328" strokeWidth="1.800" /><path d="M4 16l6.500-6.500" stroke="#f1f3f3" strokeWidth="1.600" /></Icon></BottomButton>
        <BottomButton $w={14} aria-label="Replier"><Icon $w={9} $h={9} viewBox="0 0 9 9"><path d="M4 .5L1 4.500l3 4M8 .5L5 4.500l3 4" fill="none" stroke="#4d5f69" /></Icon></BottomButton>
        <ScrollButton aria-label="Défiler à gauche"><Icon $w={5} $h={7} viewBox="0 0 5 7"><path d="M5 0v7L0 3.500z" fill="#0c1318" /></Icon></ScrollButton>
        <Track><Thumb /></Track>
        <ScrollButton aria-label="Défiler à droite"><Icon $w={5} $h={7} viewBox="0 0 5 7"><path d="M0 0v7l5-3.500z" fill="#0c1318" /></Icon></ScrollButton>
        <BottomButton $w={27} aria-label="Ajuster">
          <Icon $w={18} $h={18} viewBox="0 0 18 18" fill="none"><path d="M10 10l6 6.500" stroke="#6f848f" strokeWidth="3" /><circle cx="7" cy="6.500" r="5" fill="#a9c4d0" stroke="#6f848f" strokeWidth="1.300" /><path d="M15.500 1v7M14 2.500L15.500 1 17 2.500M14 6.500L15.500 8 17 6.500M0 15.500h8M1.500 14L0 15.500 1.500 17M6.500 14L8 15.500 6.500 17" stroke="#5f76d8" /></Icon>
        </BottomButton>
        <BottomButton $w={24} aria-label="Zoom arrière"><Magnifier sign="M4 6.500h6" tone="#12181c" /></BottomButton>
        <BottomButton $w={24} aria-label="Zoom avant"><Magnifier sign="M4 6.500h6M7 3.500v6" tone="#12181c" /></BottomButton>
        <BottomButton $w={24} aria-label="Ancrer"><Icon $w={16} $h={16} viewBox="0 0 16 16"><path d="M0 1h16v4H0z" fill="#f0f3f4" /><path d="M1 3h14" stroke="#1d262c" strokeWidth="2" strokeDasharray="2.500 1.500" /><path d="M6.500 7h3v3.500H12L8 15l-4-4.500h2.500z" fill="#1f55c8" /></Icon></BottomButton>
      </BottomBar>

      <TaskBar>
        {tasks.map((t) => (
          <Task key={t.name} $w={t.w} $active={t.active} $open={t.open} aria-label={t.name}>
            <Icon $w={24} $h={24} viewBox="0 0 24 24">{t.art}</Icon>
          </Task>
        ))}
        <Clock><time>09:43</time><DateLine>23/08/2023</DateLine></Clock>
      </TaskBar>
    </Root>
  );
}
